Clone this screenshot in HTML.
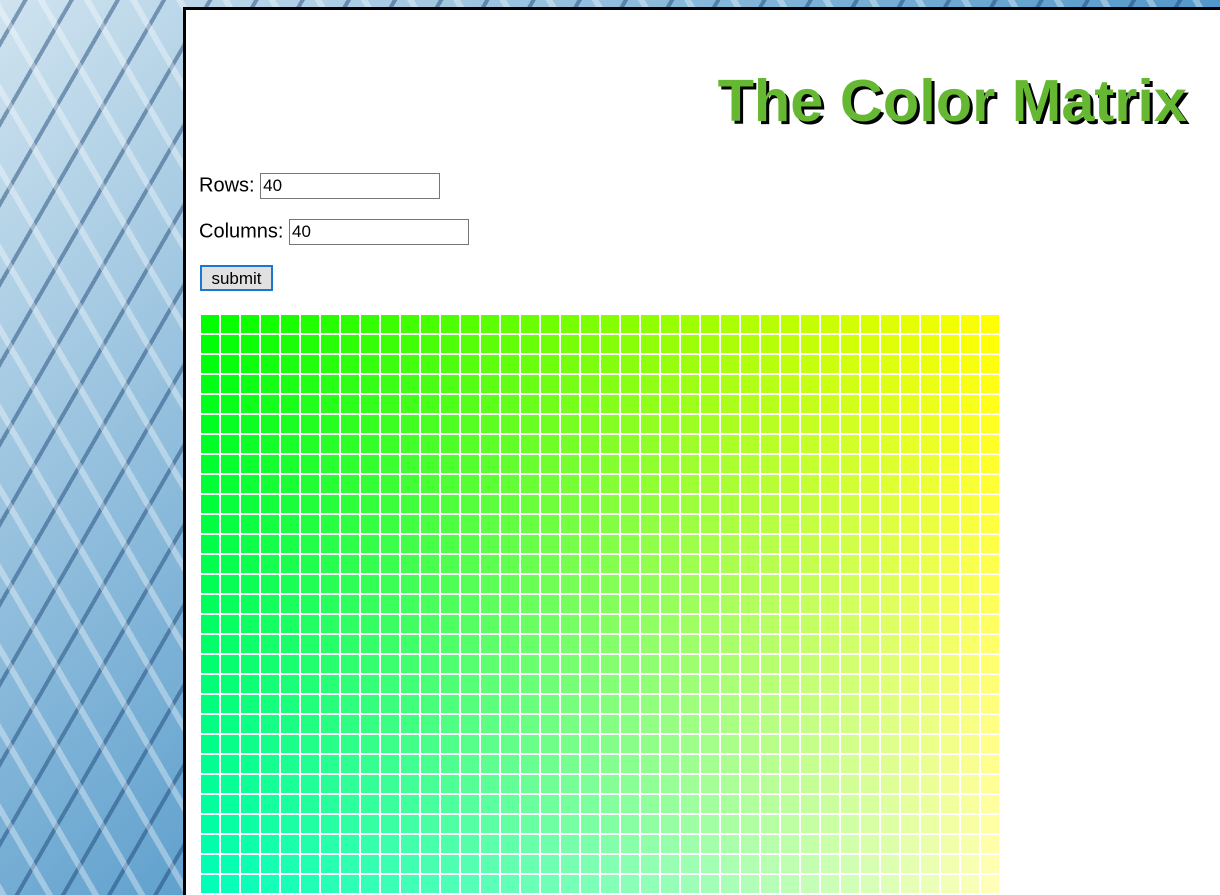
<!DOCTYPE html>
<html><head><style>
html,body{margin:0;height:895px;overflow:hidden}
body{width:1220px;background:#5a9ccc;
background-image:
repeating-linear-gradient(60deg,rgba(255,255,255,.35) 0 6px,transparent 6px 40px),
repeating-linear-gradient(-60deg,rgba(20,60,110,.45) 0 4px,transparent 4px 40px),
linear-gradient(135deg,#cfe3ef,#4d95c8 60%,#2a6ea6);
font-family:"Liberation Sans",sans-serif;position:relative}
#panel{position:absolute;left:183px;top:7px;width:1034px;height:885px;background:#fff;border-left:3px solid #000;border-top:3px solid #000;overflow:hidden}
h1{position:absolute;right:33px;top:56px;margin:0;font-size:59.5px;font-weight:bold;color:#66b833;text-shadow:3px 3px 0 #000;white-space:nowrap}
.lbl{position:absolute;left:13px;font-size:20px;color:#000}
input{font:17px "Liberation Sans",sans-serif;border:1px solid #777;height:26px;width:180px;padding:0 2px;box-sizing:border-box;vertical-align:middle}
#btn{position:absolute;left:14px;top:255px;width:73px;height:26px;box-sizing:border-box;border:2px solid #1a78d0;background:#e1e1e1;font-size:17px;text-align:center;line-height:24px}
#grid{position:absolute;left:15px;top:305px;width:800px}
#grid div{float:left;width:18px;height:18px;margin:0 2px 2px 0}
</style></head><body>
<div id="panel">
<h1>The Color Matrix</h1>
<div class="lbl" style="top:163px">Rows: <input value="40"></div>
<div class="lbl" style="top:209px">Columns: <input value="40"></div>
<div id="btn">submit</div>
<div id="grid"></div>
</div>
<script>
var g=document.getElementById('grid'),h='';
for(var r=0;r<29;r++)for(var c=0;c<40;c++){h+='<div style="background:rgb('+Math.round(c*255/39)+',255,'+Math.round(r*255/39)+')"></div>';}
g.innerHTML=h;
</script>
</body></html>
